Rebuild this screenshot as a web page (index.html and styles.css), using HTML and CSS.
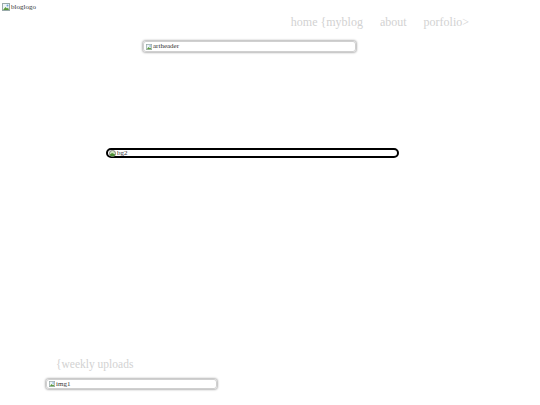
FILE: index.html
```
<!DOCTYPE html>
<html>
<head>
<meta charset="utf-8">
<link rel="stylesheet" href="styles.css">
</head>
<body>
<header class="top">
  <div class="logo">
    <svg class="broken" viewBox="0 0 8 8" width="8" height="8"><rect x="0.5" y="0.5" width="7" height="7" fill="#eef4f8" stroke="#9aa"/><path d="M1 7 L3.5 4 L5 5.5 L6 4.5 L7 7 Z" fill="#5a9a3a"/><circle cx="5.5" cy="2.5" r="1" fill="#6aa0d8"/></svg>
    <span class="alt logo-alt">bloglogo</span>
  </div>
  <nav class="nav">
    <span>home {myblog</span>
    <span>about</span>
    <span>porfolio&gt;</span>
  </nav>
</header>
<main>
  <div class="artheader">
    <svg class="broken" viewBox="0 0 8 8" width="6" height="6"><rect x="0.5" y="0.5" width="7" height="7" fill="#eef4f8" stroke="#9aa"/><path d="M1 7 L3.5 4 L5 5.5 L6 4.5 L7 7 Z" fill="#5a9a3a"/><circle cx="5.5" cy="2.5" r="1" fill="#6aa0d8"/></svg>
    <span class="alt">artheader</span>
  </div>
  <div class="bg2">
    <svg class="broken" viewBox="0 0 8 8" width="7" height="7"><circle cx="4" cy="4" r="3.5" fill="#cfe3c0" stroke="#777"/><path d="M1 5 L3.5 3.5 L7 5 L6 7 L2 7 Z" fill="#4d8f34"/></svg>
    <span class="alt">bg2</span>
  </div>
  <section class="weekly">
    <h2 class="weekly-title">{weekly uploads</h2>
    <div class="img1">
      <svg class="broken" viewBox="0 0 8 8" width="6" height="6"><rect x="0.5" y="0.5" width="7" height="7" fill="#eef4f8" stroke="#9aa"/><path d="M1 7 L3.5 4 L5 5.5 L6 4.5 L7 7 Z" fill="#5a9a3a"/><circle cx="5.5" cy="2.5" r="1" fill="#6aa0d8"/></svg>
      <span class="alt">img1</span>
    </div>
  </section>
</main>
</body>
</html>
```
FILE: styles.css
```
html, body {
  margin: 0;
  padding: 0;
  background: #ffffff;
}
body {
  font-family: "Liberation Serif", "Times New Roman", serif;
  width: 540px;
  height: 405px;
  overflow: hidden;
}
.top {
  display: flex;
  align-items: flex-start;
  height: 41px;
}
.logo {
  display: flex;
  align-items: center;
  gap: 1px;
  margin: 2px 0 0 2px;
  height: 10px;
}
.alt {
  font-size: 8px;
  line-height: 8px;
  color: #333;
}
.logo-alt {
  font-size: 7px;
  line-height: 8px;
}
.broken {
  display: block;
  flex: none;
}
.nav {
  display: flex;
  gap: 17px;
  margin: 15px 71px 0 auto;
  font-size: 12px;
  line-height: 15px;
  color: #d2d2d2;
}
.artheader {
  box-sizing: border-box;
  display: flex;
  align-items: center;
  gap: 1px;
  margin-left: 143px;
  width: 213px;
  height: 11px;
  padding-left: 2px;
  border: 1px solid #d0d0d0;
  border-radius: 3px;
  box-shadow: 0 0 2px 1px #b8b8b8;
}
.artheader .alt,
.img1 .alt {
  font-size: 7px;
  line-height: 7px;
}
.bg2 {
  box-sizing: border-box;
  display: flex;
  align-items: center;
  gap: 1px;
  margin: 96px 0 0 106px;
  width: 293px;
  height: 10px;
  padding-left: 1px;
  border: 2px solid #000;
  border-radius: 5px;
}
.bg2 .alt {
  font-size: 7px;
  line-height: 7px;
}
.weekly {
  margin-top: 198px;
}
.weekly-title {
  margin: 0 0 0 56px;
  font-size: 11.5px;
  line-height: 16px;
  font-weight: normal;
  color: #d2d2d2;
}
.img1 {
  box-sizing: border-box;
  display: flex;
  align-items: center;
  gap: 1px;
  margin: 7px 0 0 46px;
  width: 171px;
  height: 10px;
  padding-left: 2px;
  border: 1px solid #d0d0d0;
  border-radius: 3px;
  box-shadow: 0 0 2px 1px #b8b8b8;
}
```
